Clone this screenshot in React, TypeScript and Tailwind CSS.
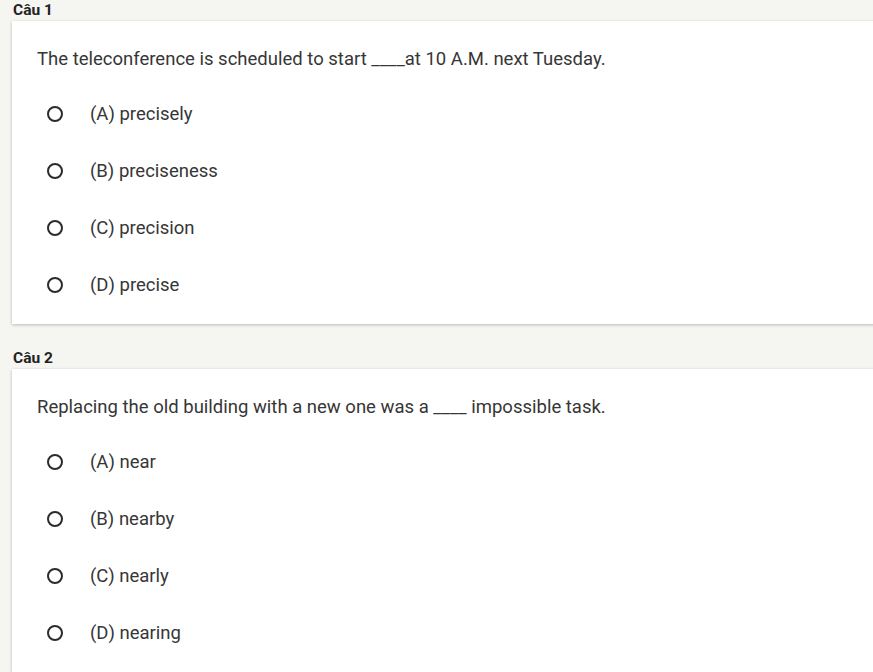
import React from "react";

const questions = [
  {
    label: "Câu 1",
    text: "The teleconference is scheduled to start ____at 10 A.M. next Tuesday.",
    options: ["(A) precisely", "(B) preciseness", "(C) precision", "(D) precise"],
  },
  {
    label: "Câu 2",
    text: "Replacing the old building with a new one was a ____ impossible task.",
    options: ["(A) near", "(B) nearby", "(C) nearly", "(D) nearing"],
  },
];

function Radio() {
  return <span className="block w-4 h-4 rounded-full border-2 border-[#2b2b2b] box-border" />;
}

export default function App() {
  return (
    <div
      className="w-[873px] h-[672px] overflow-hidden bg-[#f5f5f1] text-[#363636]"
      style={{ fontFamily: "Roboto, 'Liberation Sans', sans-serif" }}
    >
      <div className="flex flex-col pl-3">
        {questions.map((q, i) => (
          <div key={i} className={i > 0 ? "mt-[24px]" : ""}>
            <div className="h-5 leading-5 text-[15.5px] font-bold text-[#222] pl-px">{q.label}</div>
            <div className="mt-px -mr-6 bg-white shadow-[0_1px_3px_rgba(0,0,0,0.25)] pt-[26px] pb-[11px]">
              <div className="pl-[25px] h-6 leading-6 text-[18.5px]">{q.text}</div>
              <div className="mt-[14px] flex flex-col">
                {q.options.map((o, j) => (
                  <div key={j} className="h-[57px] flex items-center pl-[35px]">
                    <Radio />
                    <span className="ml-[27px] text-[18.5px] leading-6">{o}</span>
                  </div>
                ))}
              </div>
            </div>
          </div>
        ))}
      </div>
    </div>
  );
}
